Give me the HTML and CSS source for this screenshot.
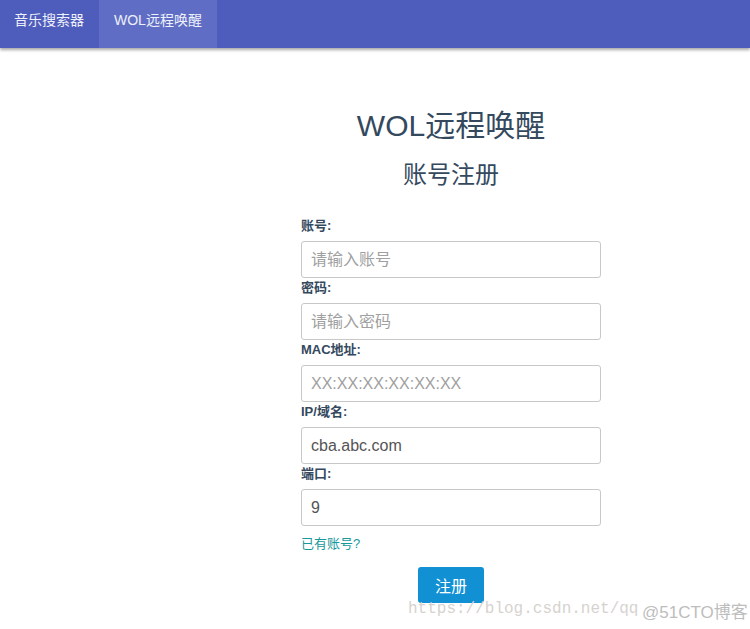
FILE: index.html
```html
<!DOCTYPE html>
<html lang="zh-CN">
<head>
    <meta charset="UTF-8">
    <meta name="viewport" content="width=device-width, initial-scale=1.0">
    <title>WOL远程唤醒</title>
    <link rel="stylesheet" href="styles.css">
</head>
<body>

    <!-- Top navigation -->
    <nav class="navbar">
        <a class="nav-item" href="#">音乐搜索器</a>
        <a class="nav-item active" href="#">WOL远程唤醒</a>
    </nav>

    <div class="main">
        <h1 class="title">WOL远程唤醒</h1>
        <h2 class="subtitle">账号注册</h2>

        <form class="reg-form">
            <div class="field">
                <label for="account">账号:</label>
                <input type="text" id="account" placeholder="请输入账号">
            </div>
            <div class="field">
                <label for="password">密码:</label>
                <input type="password" id="password" placeholder="请输入密码">
            </div>
            <div class="field">
                <label for="mac">MAC地址:</label>
                <input type="text" id="mac" placeholder="XX:XX:XX:XX:XX:XX">
            </div>
            <div class="field">
                <label for="host">IP/域名:</label>
                <input type="text" id="host" value="cba.abc.com">
            </div>
            <div class="field">
                <label for="port">端口:</label>
                <input type="text" id="port" value="9">
            </div>

            <a class="login-link" href="#">已有账号?</a>

            <div class="button-row">
                <button type="button">注册</button>
            </div>
        </form>
    </div>

    <!-- watermarks -->
    <div class="wm-url">https://blog.csdn.net/qq</div>
    <div class="wm-site">@51CTO博客</div>

</body>
</html>
```

FILE: styles.css
```css
body {
    margin: 0;
    font-family: "Liberation Sans", "Noto Sans CJK SC", sans-serif;
    background-color: #fff;
    color: #34495e;
}

.navbar {
    display: flex;
    height: 48px;
    background-color: #4e5dbb;
    box-shadow: 0 2px 3px rgba(0, 0, 0, 0.35);
}

.nav-item {
    padding: 10px 15px 0 14px;
    font-size: 14px;
    line-height: 20px;
    color: #eef0fa;
    text-decoration: none;
}

.nav-item.active {
    padding: 10px 15px 0;
    background-color: #5f6ec4;
}

.main {
    width: 300px;
    margin-left: 301px;
    padding-top: 58px;
}

.title {
    margin: 0;
    text-align: center;
    font-size: 30px;
    font-weight: normal;
    line-height: 40px;
    color: #34495e;
}

.subtitle {
    margin: 13px 0 0;
    text-align: center;
    font-size: 24px;
    font-weight: normal;
    line-height: 32px;
    color: #34495e;
}

.reg-form {
    margin-top: 25px;
}

.field label {
    display: block;
    font-size: 13px;
    font-weight: bold;
    line-height: 20px;
    margin-bottom: 5px;
    color: #34495e;
}

.field input {
    display: block;
    box-sizing: border-box;
    width: 300px;
    height: 37px;
    padding: 0 9px;
    border: 1px solid #c8c8c8;
    border-radius: 3px;
    font-family: "Liberation Sans", "Noto Sans CJK SC", sans-serif;
    font-size: 16px;
    color: #555;
}

.field input::placeholder {
    color: #a0a0a0;
}

.login-link {
    display: inline-block;
    margin-top: 8px;
    font-size: 13px;
    line-height: 20px;
    color: #16999b;
    text-decoration: none;
}

.button-row {
    margin-top: 13px;
    text-align: center;
}

.button-row button {
    width: 66px;
    height: 36px;
    border: none;
    border-radius: 3px;
    background-color: #1290d4;
    color: #fff;
    font-family: "Liberation Sans", "Noto Sans CJK SC", sans-serif;
    font-size: 16px;
}

.wm-url {
    position: absolute;
    left: 408px;
    top: 600px;
    font-family: "Liberation Mono", "Noto Sans CJK SC", monospace;
    font-size: 16px;
    color: #d6d3cf;
}

.wm-site {
    position: absolute;
    left: 642px;
    top: 598px;
    font-size: 17px;
    color: #bdbdbd;
}
```
